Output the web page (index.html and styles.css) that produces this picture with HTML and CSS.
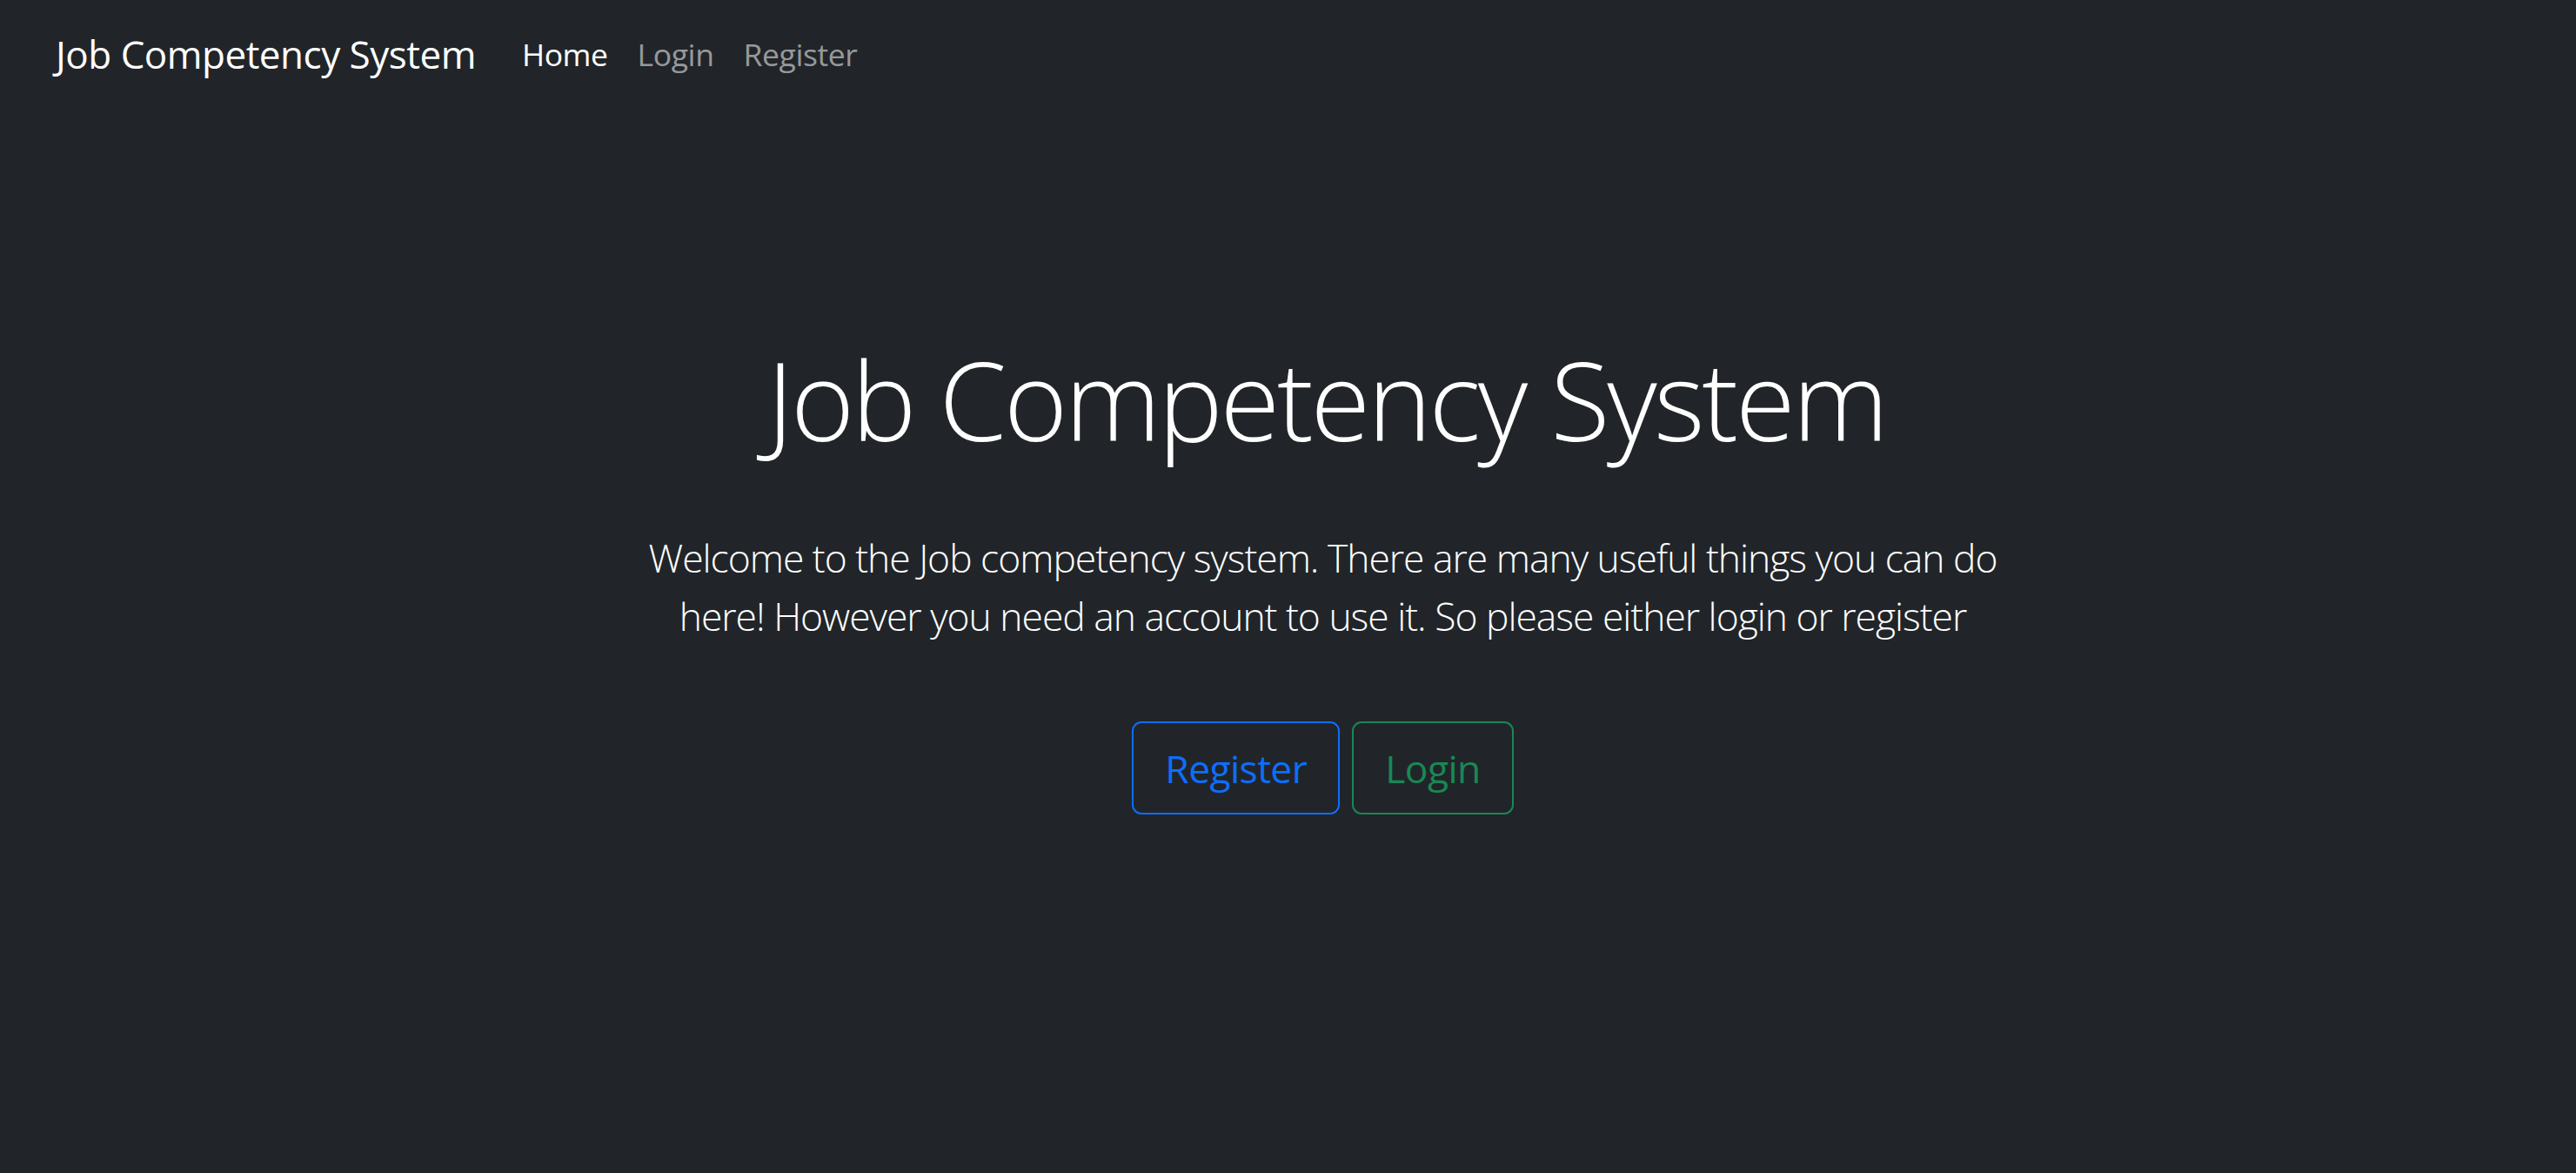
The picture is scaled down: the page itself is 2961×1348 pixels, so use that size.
FILE: index.html
```html
<!DOCTYPE html>
<html lang="en">
<head>
<meta charset="utf-8">
<title>Job Competency System</title>
<link rel="stylesheet" href="styles.css">
</head>
<body>
<nav class="navbar">
  <a class="brand" href="#">Job Competency System</a>
  <ul class="nav">
    <li><a class="nav-link active" href="#">Home</a></li>
    <li><a class="nav-link" href="#">Login</a></li>
    <li><a class="nav-link" href="#">Register</a></li>
  </ul>
</nav>
<main class="hero">
  <h1 class="title">Job Competency System</h1>
  <p class="lead">Welcome to the Job competency system. There are many useful things you can do here! However you need an account to use it. So please either login or register</p>
  <div class="actions">
    <a class="btn btn-blue" href="#">Register</a>
    <a class="btn btn-green" href="#">Login</a>
  </div>
</main>
</body>
</html>
```
FILE: styles.css
```css
html, body {
  margin: 0;
  padding: 0;
  background: #212529;
  color: #ffffff;
  font-family: "Open Sans", "Noto Sans", sans-serif;
}
a { text-decoration: none; }

.navbar {
  display: flex;
  align-items: center;
  padding: 29px 60px 14px 64px;
}
.brand {
  color: #ffffff;
  font-size: 44px;
  line-height: 66px;
  letter-spacing: -0.5px;
  margin-right: 36px;
}
.nav {
  display: flex;
  list-style: none;
  margin: 0;
  padding: 0;
}
.nav-link {
  display: block;
  color: rgba(255, 255, 255, 0.55);
  font-size: 35.5px;
  line-height: 53px;
  letter-spacing: -0.4px;
  padding: 0 17px;
}
.nav-link.active { color: #ffffff; }

.hero {
  display: flex;
  flex-direction: column;
  align-items: center;
  padding: 275px 0 0 80px;
  text-align: center;
}
.title {
  margin: 0;
  font-size: 125px;
  font-weight: 300;
  line-height: 1.2;
  letter-spacing: -3.2px;
  padding-left: 8px;
}
.lead {
  margin: 74px 0 0;
  max-width: 1600px;
  font-size: 44.4px;
  font-weight: 300;
  line-height: 1.5;
  letter-spacing: -1px;
}
.actions {
  display: flex;
  gap: 14px;
  margin-top: 88px;
}
.btn {
  display: flex;
  align-items: center;
  height: 107px;
  box-sizing: border-box;
  padding: 0 36px;
  border: 2px solid;
  border-radius: 11px;
  font-size: 44.4px;
  letter-spacing: -0.6px;
}
.btn-blue { color: #0d6efd; border-color: #0d6efd; }
.btn-green { color: #198754; border-color: #198754; }
```
